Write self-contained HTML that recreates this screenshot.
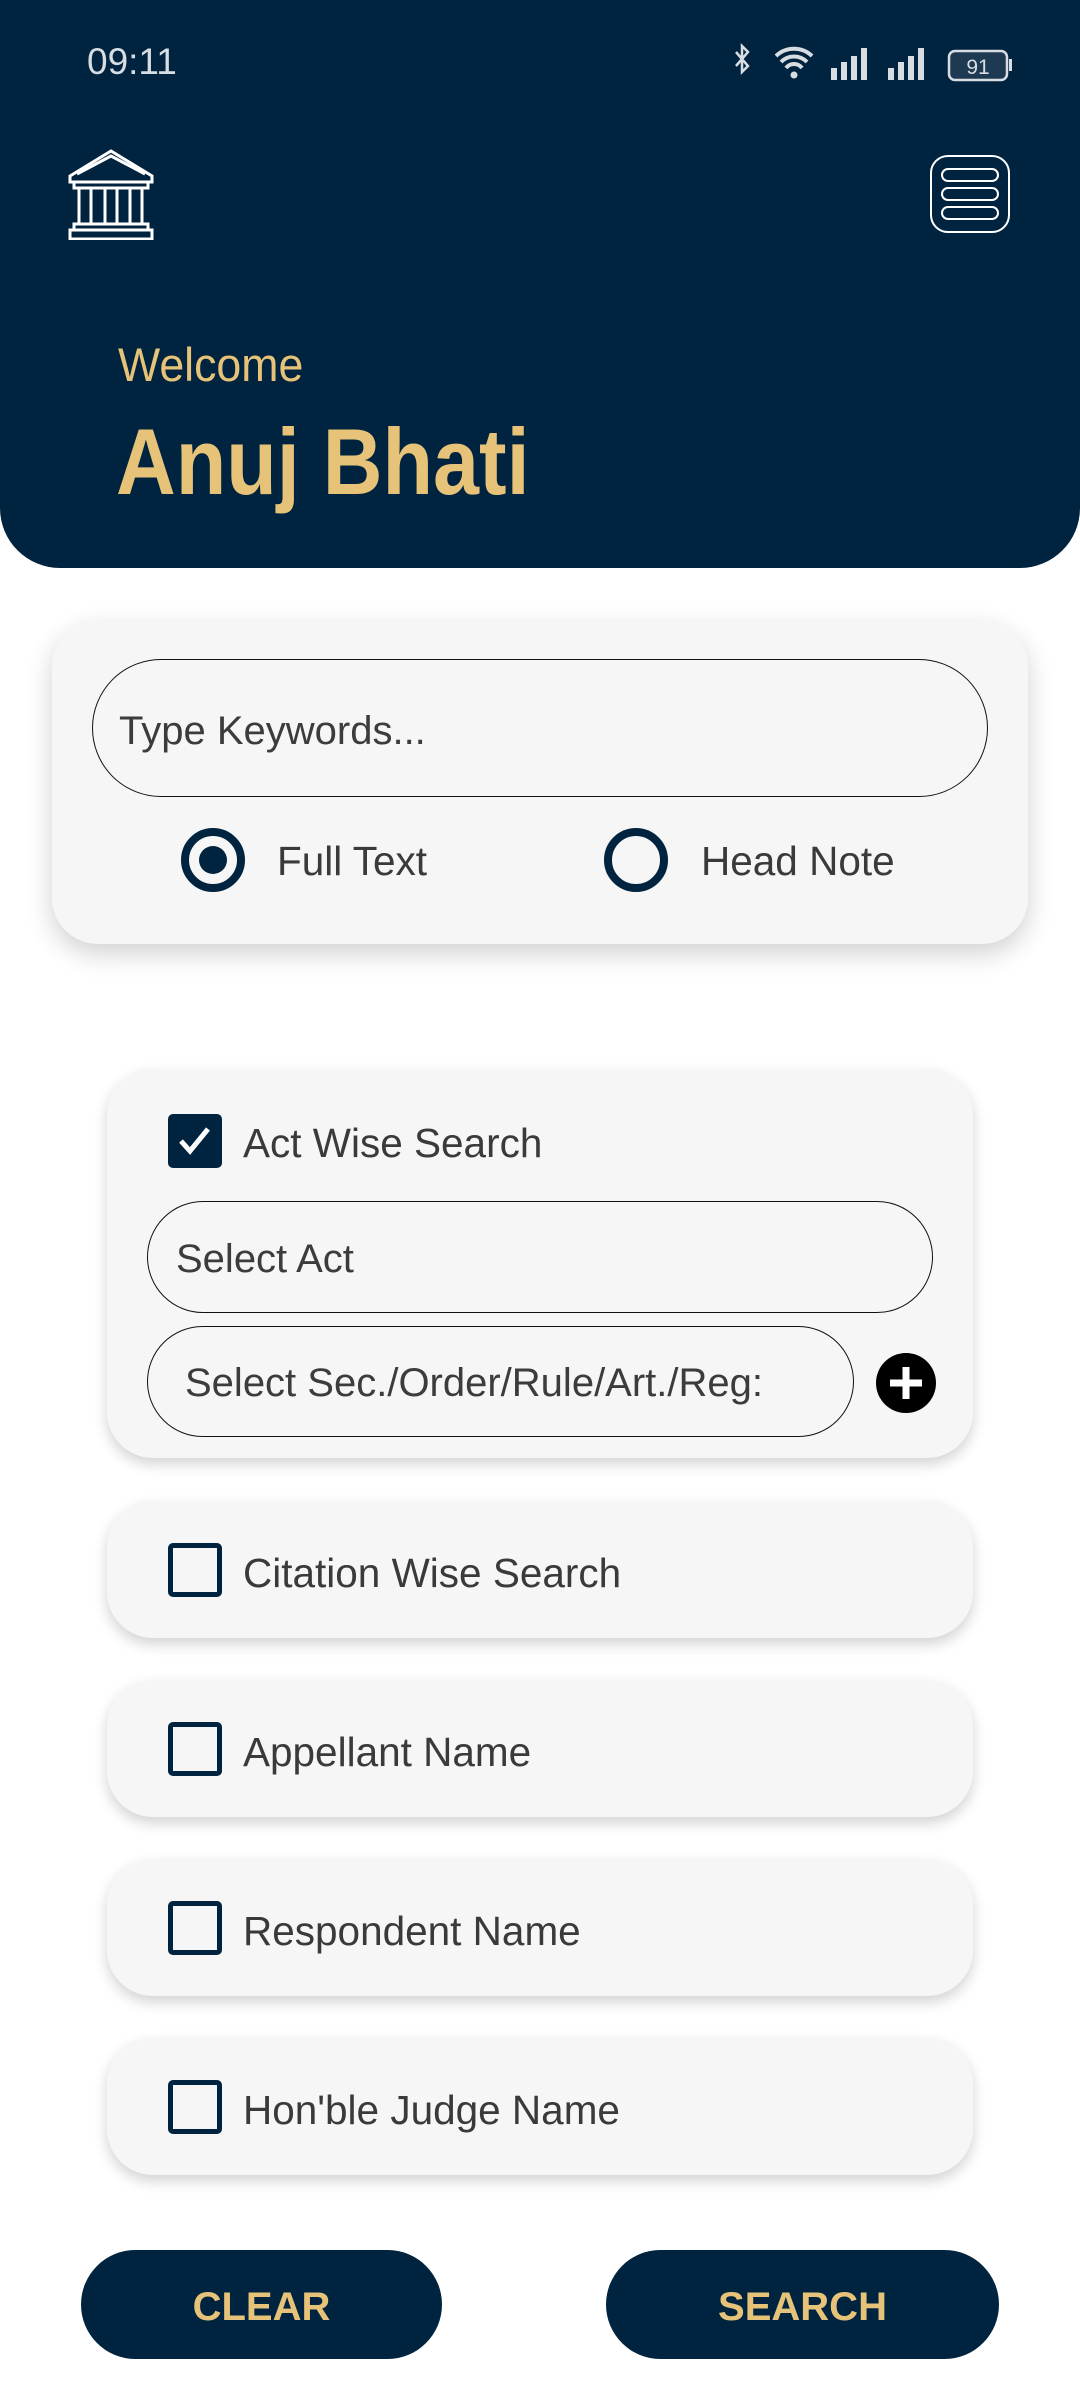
<!DOCTYPE html>
<html><head><meta charset="utf-8"><style>
*{margin:0;padding:0;box-sizing:border-box}
body{width:1080px;height:2400px;background:#fff;font-family:"Liberation Sans",sans-serif;position:relative;overflow:hidden;color:#3a3a3a}
.hdr{position:absolute;left:0;top:0;width:1080px;height:568px;background:#00243f;border-radius:0 0 60px 60px}
.abs{position:absolute}
.card{position:absolute;background:#f6f6f6;border-radius:46px;box-shadow:0 6px 14px rgba(0,0,0,0.18)}
.field{position:absolute;border:1.5px solid #111;border-radius:60px;font-size:40px;color:#3c3c3c;display:flex;align-items:center}
.cb{position:absolute;width:54px;height:54px;border:5px solid #00243f;border-radius:5px}
.lbl{position:absolute;font-size:40.5px;color:#3a3a3a;line-height:1}
.btn{position:absolute;background:#00243f;border-radius:56px;color:#e6c378;font-weight:bold;font-size:40px;display:flex;align-items:center;justify-content:center;top:2250px;height:109px;padding-top:6px}
</style></head><body>
<div class="hdr"></div>
<div class="abs" style="left:87px;top:41px;font-size:37px;color:#d8dde3">09:11</div>
<svg class="abs" style="left:730px;top:42px" width="290" height="42" viewBox="0 0 290 42">
<path d="M6 10l12 14-6 6V4l6 6-12 14" stroke="#d8dde3" stroke-width="2.5" fill="none"/>
<path d="M46 14a26 26 0 0 1 36 0M51 20a18 18 0 0 1 26 0M56 26a10 10 0 0 1 16 0" stroke="#d8dde3" stroke-width="4" fill="none"/>
<circle cx="64" cy="33" r="3.5" fill="#d8dde3"/>
<rect x="101" y="26" width="6" height="12" fill="#d8dde3"/><rect x="111" y="20" width="6" height="18" fill="#d8dde3"/><rect x="121" y="14" width="6" height="24" fill="#d8dde3"/><rect x="131" y="6" width="6" height="32" fill="#d8dde3"/>
<rect x="158" y="26" width="6" height="12" fill="#d8dde3"/><rect x="168" y="20" width="6" height="18" fill="#d8dde3"/><rect x="178" y="14" width="6" height="24" fill="#d8dde3"/><rect x="188" y="6" width="6" height="32" fill="#d8dde3"/>
<rect x="219" y="9" width="58" height="29" rx="6" stroke="#d8dde3" stroke-width="2.5" fill="#1e3a52"/>
<rect x="279" y="17" width="3" height="12" fill="#d8dde3"/>
<text x="248" y="32" font-size="21" fill="#d8dde3" text-anchor="middle" font-family="Liberation Sans">91</text>
</svg>
<svg class="abs" style="left:67px;top:148px" width="88" height="92" viewBox="0 0 88 92">
<g stroke="#fff" stroke-width="3" fill="none">
<path d="M3 28L44 3 85 28V34H3Z"/><path d="M10 26L44 8 78 26"/>
<rect x="7" y="34" width="74" height="6"/>
<rect x="12" y="40" width="12" height="36"/><rect x="38" y="40" width="12" height="36"/><rect x="63" y="40" width="12" height="36"/>
<rect x="7" y="76" width="74" height="6"/><rect x="3" y="82" width="82" height="9"/>
</g></svg>
<div class="abs" style="left:930px;top:155px;width:80px;height:78px;border:2px solid #fff;border-radius:18px"></div>
<div class="abs" style="left:941px;top:168px;width:58px;height:14px;border:2.5px solid #fff;border-radius:7px"></div>
<div class="abs" style="left:941px;top:187px;width:58px;height:14px;border:2.5px solid #fff;border-radius:7px"></div>
<div class="abs" style="left:941px;top:206px;width:58px;height:14px;border:2.5px solid #fff;border-radius:7px"></div>
<div class="abs" style="left:118px;top:337px;font-size:47px;color:#e6c378;transform:scaleX(0.95);transform-origin:left">Welcome</div>
<div class="abs" style="left:116px;top:408px;font-size:94px;font-weight:bold;color:#e6c378;transform:scaleX(0.88);transform-origin:left">Anuj Bhati</div>

<div class="card" style="left:52px;top:620px;width:976px;height:324px;box-shadow:0 10px 26px rgba(0,0,0,0.18)"></div>
<div class="field" style="left:92px;top:659px;width:896px;height:138px;border-radius:69px;padding-left:26px;padding-top:6px">Type Keywords...</div>
<div class="abs" style="left:181px;top:828px;width:64px;height:64px;border:8px solid #00243f;border-radius:50%"><div style="position:absolute;left:10px;top:10px;width:28px;height:28px;background:#00243f;border-radius:50%"></div></div>
<div class="lbl" style="left:277px;top:841px">Full Text</div>
<div class="abs" style="left:604px;top:828px;width:64px;height:64px;border:8px solid #00243f;border-radius:50%"></div>
<div class="lbl" style="left:701px;top:841px">Head Note</div>

<div class="card" style="left:107px;top:1069px;width:866px;height:389px"></div>
<div class="cb" style="left:168px;top:1114px;background:#00243f"><svg width="44" height="44" viewBox="0 0 44 44" style="position:absolute;left:0;top:0"><path d="M8 22l9 10 18-22" stroke="#fff" stroke-width="5" fill="none"/></svg></div>
<div class="lbl" style="left:243px;top:1123px">Act Wise Search</div>
<div class="field" style="left:147px;top:1201px;width:786px;height:112px;border-radius:56px;padding-left:28px;padding-top:4px">Select Act</div>
<div class="field" style="left:147px;top:1326px;width:707px;height:111px;border-radius:56px;padding-left:37px;padding-top:4px">Select Sec./Order/Rule/Art./Reg:</div>
<svg class="abs" style="left:876px;top:1353px" width="60" height="60" viewBox="0 0 60 60"><circle cx="30" cy="30" r="30" fill="#000"/><path d="M30 14v32M14 30h32" stroke="#fff" stroke-width="7"/></svg>

<div class="card" style="left:107px;top:1501px;width:866px;height:137px"></div>
<div class="cb" style="left:168px;top:1543px"></div><div class="lbl" style="left:243px;top:1553px">Citation Wise Search</div>
<div class="card" style="left:107px;top:1680px;width:866px;height:137px"></div>
<div class="cb" style="left:168px;top:1722px"></div><div class="lbl" style="left:243px;top:1732px">Appellant Name</div>
<div class="card" style="left:107px;top:1859px;width:866px;height:137px"></div>
<div class="cb" style="left:168px;top:1901px"></div><div class="lbl" style="left:243px;top:1911px">Respondent Name</div>
<div class="card" style="left:107px;top:2038px;width:866px;height:137px"></div>
<div class="cb" style="left:168px;top:2080px"></div><div class="lbl" style="left:243px;top:2090px">Hon'ble Judge Name</div>

<div class="btn" style="left:81px;width:361px">CLEAR</div>
<div class="btn" style="left:606px;width:393px">SEARCH</div>
</body></html>
